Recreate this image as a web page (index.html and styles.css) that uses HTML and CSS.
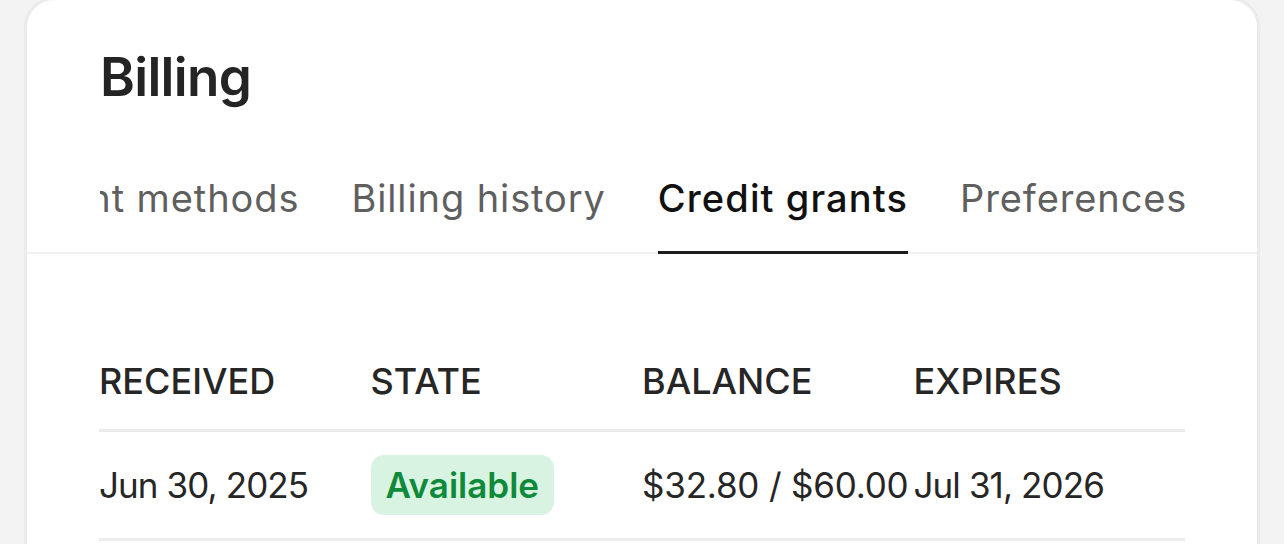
FILE: index.html
```html
<!DOCTYPE html>
<html lang="en">
<head>
<meta charset="utf-8">
<title>Billing</title>
<link rel="stylesheet" href="styles.css">
</head>
<body>
<div class="page">
  <section class="card">
    <h1 class="title">Billing</h1>
    <nav class="tabs">
      <div class="tab-scroll">
        <div class="tab-list">
          <a class="tab">Payment methods</a>
          <a class="tab">Billing history</a>
          <a class="tab active">Credit grants</a>
          <a class="tab">Preferences</a>
        </div>
      </div>
    </nav>
    <div class="table-wrap">
      <table class="grants">
        <thead>
          <tr>
            <th>RECEIVED</th>
            <th>STATE</th>
            <th>BALANCE</th>
            <th>EXPIRES</th>
          </tr>
        </thead>
        <tbody>
          <tr>
            <td>Jun 30, 2025</td>
            <td><span class="badge">Available</span></td>
            <td class="amount">$32.80 / $60.00</td>
            <td>Jul 31, 2026</td>
          </tr>
        </tbody>
      </table>
    </div>
  </section>
</div>
</body>
</html>
```

FILE: styles.css
```css
* { box-sizing: border-box; }
html, body {
  margin: 0;
  background: #f3f3f3;
  font-family: Inter, "Noto Sans", "Liberation Sans", sans-serif;
  color: #242424;
}
.page {
  padding: 0 24px;
  height: 544px;
  overflow: hidden;
}
.card {
  background: #fff;
  border: 3px solid #ebebeb;
  border-bottom: none;
  border-radius: 30px 30px 0 0;
  margin-top: -3px;
  min-height: 600px;
}
.title {
  margin: 0;
  padding: 45px 0 0 73px;
  font-size: 53px;
  line-height: 64px;
  font-weight: 600;
  color: #242424;
  letter-spacing: -0.7px;
}
.tabs {
  margin-top: 66px;
  border-bottom: 2px solid #f1f1f1;
  padding: 0 72px 0 73px;
}
.tab-scroll {
  clip-path: inset(0 0 -6px 0);
}
.tab-list {
  display: flex;
  gap: 52px;
  margin-left: -138px;
  white-space: nowrap;
}
.tab {
  font-size: 38px;
  line-height: 46px;
  letter-spacing: 0.9px;
  padding-bottom: 30px;
  color: #5f5f5f;
  border-bottom: 3px solid transparent;
  margin-bottom: -2px;
}
.tab.active {
  color: #111;
  font-weight: 500;
  letter-spacing: 1.1px;
  border-bottom-color: #1c1c1c;
}
.table-wrap {
  padding: 0 72px;
  margin-top: 105px;
}
.grants {
  width: 1086px;
  border-collapse: collapse;
  table-layout: fixed;
}
.grants th {
  text-align: left;
  font-size: 36px;
  font-weight: 500;
  color: #262626;
  padding: 0 0 26px 0;
  border-bottom: 3px solid #ececec;
  line-height: 44px;
}
.grants td {
  font-size: 35px;
  letter-spacing: -0.9px;
  color: #262626;
  padding: 23px 0 23px 0;
  border-bottom: 3px solid #ececec;
  line-height: 44px;
  white-space: nowrap;
}
.grants td.amount {
  letter-spacing: -0.2px;
}
.badge {
  display: inline-block;
  background: #d9f3e3;
  color: #0e8a3a;
  font-weight: 600;
  letter-spacing: 0;
  border-radius: 13px;
  padding: 8px 15px;
  line-height: 44px;
}
```
